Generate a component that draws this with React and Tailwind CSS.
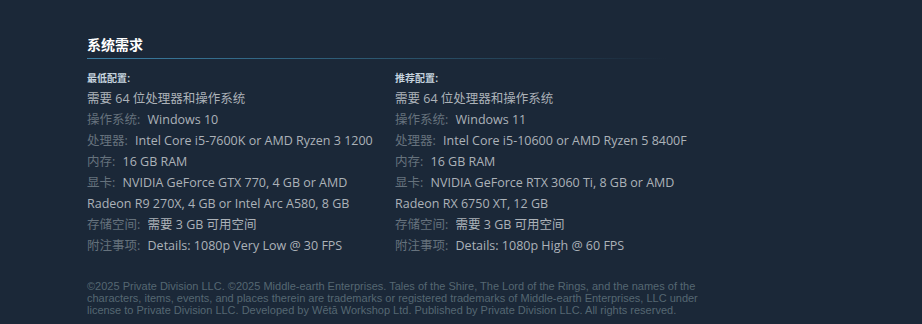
import React from 'react';

const minimum = [
  { label: '操作系统:', value: 'Windows 10' },
  { label: '处理器:', value: 'Intel Core i5-7600K or AMD Ryzen 3 1200' },
  { label: '内存:', value: '16 GB RAM' },
  { label: '显卡:', value: 'NVIDIA GeForce GTX 770, 4 GB or AMD Radeon R9 270X, 4 GB or Intel Arc A580, 8 GB' },
  { label: '存储空间:', value: '需要 3 GB 可用空间' },
  { label: '附注事项:', value: 'Details: 1080p Very Low @ 30 FPS' },
];

const recommended = [
  { label: '操作系统:', value: 'Windows 11' },
  { label: '处理器:', value: 'Intel Core i5-10600 or AMD Ryzen 5 8400F' },
  { label: '内存:', value: '16 GB RAM' },
  { label: '显卡:', value: 'NVIDIA GeForce RTX 3060 Ti, 8 GB or AMD Radeon RX 6750 XT, 12 GB' },
  { label: '存储空间:', value: '需要 3 GB 可用空间' },
  { label: '附注事项:', value: 'Details: 1080p High @ 60 FPS' },
];

function ReqColumn({ title, rows }) {
  return (
    <div className="w-[308px] pr-[6px]">
      <div className="text-[10px] font-bold text-[#c6d4df] leading-4 mb-[1px]">{title}</div>
      <ul
        className="text-[12.5px] leading-[21px] text-[#acb2b8]"
        style={{ fontFamily: '"Open Sans", "Noto Sans CJK SC", sans-serif' }}
      >
        <li>需要 64 位处理器和操作系统</li>
        {rows.map((row) => (
          <li key={row.label}>
            <span className="text-[#66727d] mr-[4px]">{row.label}</span> {row.value}
          </li>
        ))}
      </ul>
    </div>
  );
}

export default function App() {
  return (
    <div
      className="min-h-[324px] bg-[#1b2838] pl-[87px] pt-[36px]"
      style={{ fontFamily: '"Liberation Sans", "Noto Sans CJK SC", Arial, sans-serif' }}
    >
      <div className="w-[616px]">
        {/* Section heading */}
        <h2 className="text-[14px] leading-[18px] text-white font-semibold">系统需求</h2>
        <div className="mt-[4px] h-px w-[580px] bg-gradient-to-r from-[#3b7ea3] via-[#2c5770] to-transparent" />

        {/* Requirement columns */}
        <div className="flex mt-[12px]">
          <ReqColumn title="最低配置:" rows={minimum} />
          <ReqColumn title="推荐配置:" rows={recommended} />
        </div>

        {/* Legal text */}
        <p className="mt-[24px] text-[11px] leading-[12px] text-[#556772]">
          ©2025 Private Division LLC. ©2025 Middle-earth Enterprises. Tales of the Shire, The Lord of the Rings, and the names of the
          characters, items, events, and places therein are trademarks or registered trademarks of Middle-earth Enterprises, LLC under
          license to Private Division LLC. Developed by Wētā Workshop Ltd. Published by Private Division LLC. All rights reserved.
        </p>
      </div>
    </div>
  );
}
